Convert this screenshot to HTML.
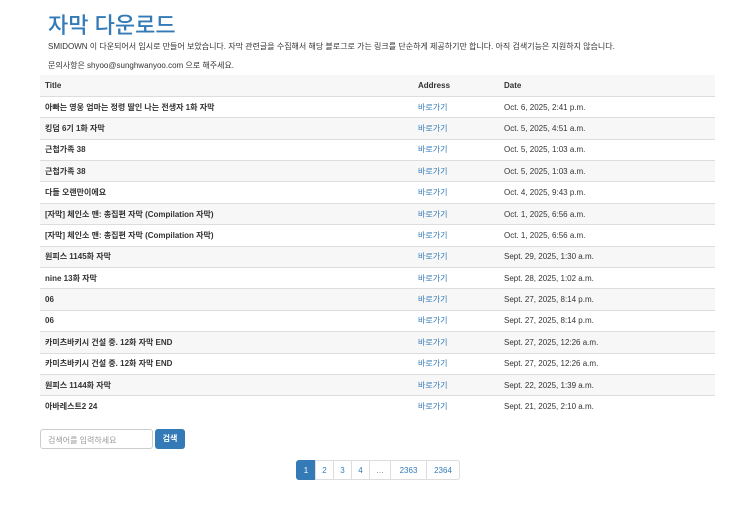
<!DOCTYPE html>
<html><head><meta charset="utf-8"><style>
body{margin:0;background:#fff;font-family:"Liberation Sans","Noto Sans CJK KR",sans-serif;color:#333;font-size:8px;}
.c{position:absolute;left:40px;width:675px;top:0}
h1{margin:0;position:absolute;left:8px;top:8px;font-size:22px;font-weight:500;color:#337ab7;font-family:"Liberation Sans","Noto Sans CJK KR",sans-serif;}
p{position:absolute;left:8px;margin:0;font-size:8px;}
table{position:absolute;top:75px;left:0;width:675px;border-collapse:collapse;}
td,th{height:21.4px;padding:0 5px;text-align:left;border-top:1px solid #ddd;font-size:8px;box-sizing:border-box;}
th{font-weight:bold;border-top:none;border-bottom:1px solid #ddd;}
tr.h{background:#f7f7f7}
tbody tr:nth-child(even){background:#f7f7f7}
td:first-child{font-weight:bold;}
a{color:#337ab7;text-decoration:none}
.in{position:absolute;left:0;top:429px;width:113px;height:20px;border:1px solid #ccc;border-radius:3px;box-sizing:border-box;color:#999;padding:5px 7px;font-size:8px;}
.bt{position:absolute;left:115px;top:429px;width:30px;height:20px;background:#337ab7;border-radius:3px;color:#fff;font-size:8px;text-align:center;line-height:20px;font-weight:bold}
.pg{position:absolute;left:256px;top:460px;display:flex;}
.pg span{height:20px;line-height:20px;border:1px solid #ddd;margin-left:-1px;color:#337ab7;font-size:8px;text-align:center;box-sizing:border-box}
</style></head><body><div class="c">
<h1>자막 다운로드</h1>
<p style="top:41px">SMIDOWN 이 다운되어서 임시로 만들어 보았습니다. 자막 관련글을 수집해서 해당 블로그로 가는 링크를 단순하게 제공하기만 합니다. 아직 검색기능은 지원하지 않습니다.</p>
<p style="top:60px">문의사항은 shyoo@sunghwanyoo.com 으로 해주세요.</p>
<table><thead><tr class="h"><th style="width:373px">Title</th><th style="width:86px">Address</th><th>Date</th></tr></thead><tbody>
<tr><td>아빠는 영웅 엄마는 정령 딸인 나는 전생자 1화 자막</td><td><a>바로가기</a></td><td>Oct. 6, 2025, 2:41 p.m.</td></tr>
<tr><td>킹덤 6기 1화 자막</td><td><a>바로가기</a></td><td>Oct. 5, 2025, 4:51 a.m.</td></tr>
<tr><td>근첩가족 38</td><td><a>바로가기</a></td><td>Oct. 5, 2025, 1:03 a.m.</td></tr>
<tr><td>근첩가족 38</td><td><a>바로가기</a></td><td>Oct. 5, 2025, 1:03 a.m.</td></tr>
<tr><td>다들 오랜만이에요</td><td><a>바로가기</a></td><td>Oct. 4, 2025, 9:43 p.m.</td></tr>
<tr><td>[자막] 체인소 맨: 총집편 자막 (Compilation 자막)</td><td><a>바로가기</a></td><td>Oct. 1, 2025, 6:56 a.m.</td></tr>
<tr><td>[자막] 체인소 맨: 총집편 자막 (Compilation 자막)</td><td><a>바로가기</a></td><td>Oct. 1, 2025, 6:56 a.m.</td></tr>
<tr><td>원피스 1145화 자막</td><td><a>바로가기</a></td><td>Sept. 29, 2025, 1:30 a.m.</td></tr>
<tr><td>nine 13화 자막</td><td><a>바로가기</a></td><td>Sept. 28, 2025, 1:02 a.m.</td></tr>
<tr><td>06</td><td><a>바로가기</a></td><td>Sept. 27, 2025, 8:14 p.m.</td></tr>
<tr><td>06</td><td><a>바로가기</a></td><td>Sept. 27, 2025, 8:14 p.m.</td></tr>
<tr><td>카미츠바키시 건설 중. 12화 자막 END</td><td><a>바로가기</a></td><td>Sept. 27, 2025, 12:26 a.m.</td></tr>
<tr><td>카미츠바키시 건설 중. 12화 자막 END</td><td><a>바로가기</a></td><td>Sept. 27, 2025, 12:26 a.m.</td></tr>
<tr><td>원피스 1144화 자막</td><td><a>바로가기</a></td><td>Sept. 22, 2025, 1:39 a.m.</td></tr>
<tr><td>아바레스트2 24</td><td><a>바로가기</a></td><td>Sept. 21, 2025, 2:10 a.m.</td></tr>
</tbody></table>
<div class="in">검색어를 입력하세요</div><div class="bt">검색</div>
<div class="pg"><span style="width:20px;background:#337ab7;color:#fff;border-color:#337ab7;margin-left:0;border-radius:3px 0 0 3px">1</span><span style="width:19px">2</span><span style="width:19px">3</span><span style="width:19px">4</span><span style="width:22px;color:#777">…</span><span style="width:37px">2363</span><span style="width:34px;border-radius:0 3px 3px 0">2364</span></div>
</div></body></html>
